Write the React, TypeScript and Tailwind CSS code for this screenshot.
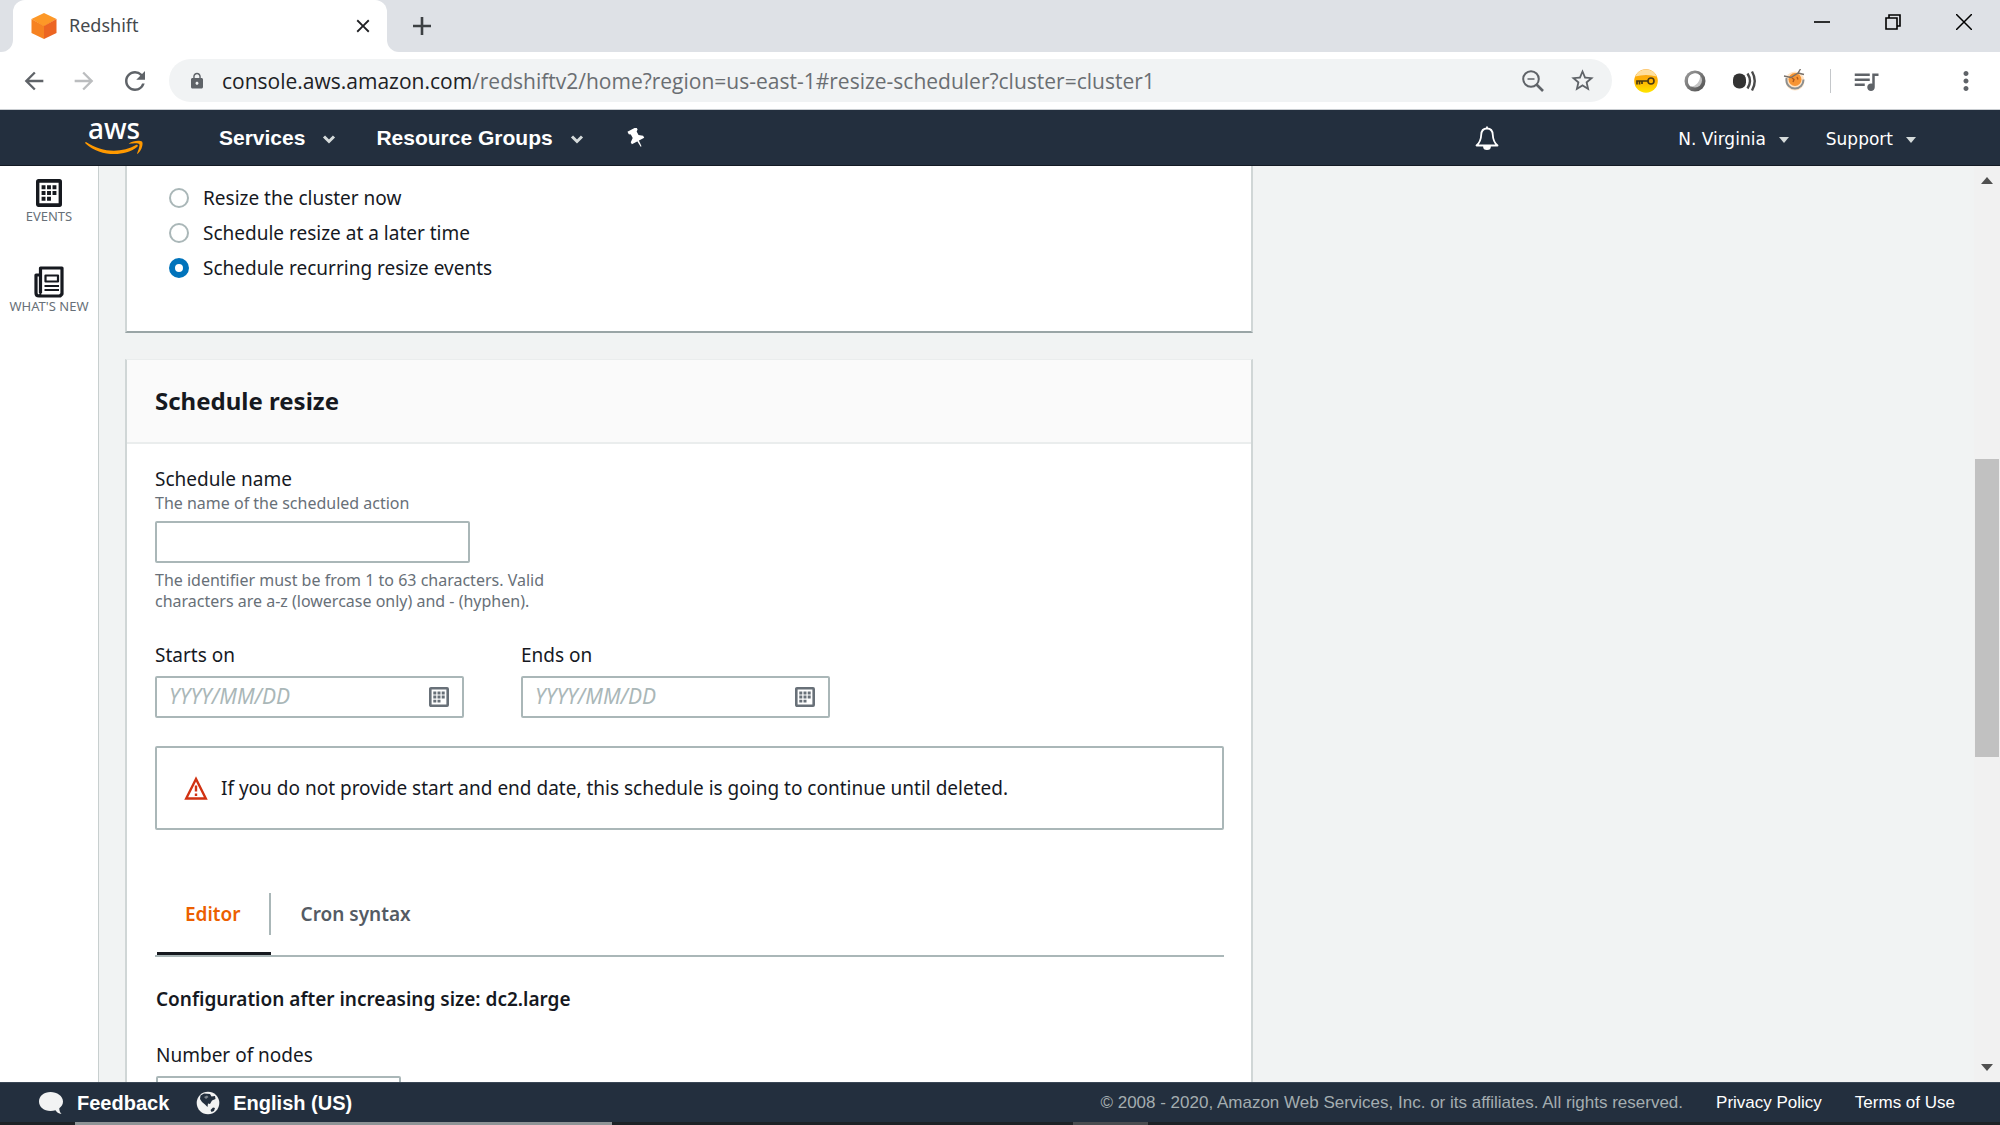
import React, { useState } from "react";
import {
  MdArrowBack, MdArrowForward, MdRefresh, MdLock, MdClose, MdStarBorder, MdMoreVert, MdQueueMusic,
} from "react-icons/md";

const ember = "font-['Noto_Sans',sans-serif]";
const openSans = "font-['Open_Sans',sans-serif]";
const arial = "font-['Liberation_Sans',sans-serif]";
const verdana = "font-['DejaVu_Sans',sans-serif]";

function TabStrip() {
  return (
    <div className="flex h-[52px] items-stretch bg-[#dee1e6]">
      <div className="flex w-[13px] bg-white">
        <div className="w-full rounded-br-xl bg-[#dee1e6]" />
      </div>
      <div className="flex w-[374px] items-center rounded-t-xl bg-white pr-[13px] pl-[18px]">
        <svg viewBox="0 0 26 26" className="size-[26px]" aria-hidden="true">
          <path d="M13 0 25.500 6 13 13.500.5 6z" fill="#fd9827" />
          <path d="M.5 6 13 13v13L.5 20z" fill="#f68221" />
          <path d="M25.500 6 13 13v13l12.500-6z" fill="#ec6522" />
        </svg>
        <span className="ml-3 flex-1 pb-px text-[18px] text-[#45494d]">Redshift</span>
        <button type="button" aria-label="Close tab" className="text-[#202124]">
          <MdClose className="size-[22px]" />
        </button>
      </div>
      <div className="flex w-[14px] bg-white">
        <div className="w-full rounded-bl-xl bg-[#dee1e6]" />
      </div>
      <button type="button" aria-label="New tab" className="ml-3 text-[#3c4043]">
        <svg viewBox="0 0 18 18" className="size-[18px]" fill="none" stroke="currentColor" strokeWidth="2.600"><path d="M0 9h18M9 0v18" /></svg>
      </button>
      <div className="ml-auto flex items-center gap-[55px] pr-7 pb-2 text-black">
        <button type="button" aria-label="Minimize">
          <svg viewBox="0 0 16 16" className="size-4" fill="none" stroke="currentColor" strokeWidth="1.600"><path d="M0 8h16" /></svg>
        </button>
        <button type="button" aria-label="Restore">
          <svg viewBox="0 0 16 16" className="size-4" fill="none" stroke="currentColor" strokeWidth="1.600">
            <path d="M1 4h11v11H1zM4 4V1h11v11h-3" />
          </svg>
        </button>
        <button type="button" aria-label="Close">
          <svg viewBox="0 0 16 16" className="size-4" fill="none" stroke="currentColor" strokeWidth="1.500"><path d="m0 0 16 16M16 0 0 16" /></svg>
        </button>
      </div>
    </div>
  );
}

function Toolbar() {
  return (
    <div className="flex h-[58px] items-center border-b border-[#c9cdd1] bg-white pr-[19px] pl-5 text-[#5f6368]">
      <button type="button" aria-label="Back"><MdArrowBack className="size-7" /></button>
      <button type="button" aria-label="Forward" className="ml-[22px] text-[#bbbdbf]"><MdArrowForward className="size-7" /></button>
      <button type="button" aria-label="Reload" className="ml-[22px]"><MdRefresh className="size-[30px]" /></button>
      <div className="ml-[19px] flex h-[43px] min-w-0 flex-1 items-center rounded-full bg-[#f1f3f4] pr-4 pl-[19px]">
        <MdLock className="size-[18px] shrink-0" />
        <p className={"ml-4 flex-1 truncate text-[21px] leading-7 text-[#6a6e72] " + openSans}>
          <span className="text-[#202124]">console.aws.amazon.com</span>/redshiftv2/home?region=us-east-1#resize-scheduler?cluster=cluster1
        </p>
        <button type="button" aria-label="Zoom" className="mr-6">
          <svg viewBox="0 0 24 24" className="size-6" fill="none" stroke="currentColor" strokeWidth="2">
            <circle cx="10" cy="10" r="7.800" /><path d="M6.500 10h7" strokeWidth="1.500" /><path d="m15.500 15.500 6.500 6.500" strokeWidth="2.600" />
          </svg>
        </button>
        <button type="button" aria-label="Bookmark this page"><MdStarBorder className="size-[27px]" /></button>
      </div>
      <div className="ml-[22px] flex items-center gap-[25px]">
        <button type="button" aria-label="Password manager">
          <svg viewBox="0 0 24 24" className="size-6">
            <defs>
              <linearGradient id="gold" x1="0" y1="0" x2="0" y2="1">
                <stop offset="0" stopColor="#f9a01b" /><stop offset=".5" stopColor="#ffb300" /><stop offset="1" stopColor="#ffe600" />
              </linearGradient>
            </defs>
            <circle cx="12" cy="12" r="11.800" fill="url(#gold)" />
            <path d="M1.200 7.500a11.800 11.800 0 0 1 21.600 0Q12 4.500 1.200 7.500z" fill="#ffdf9c" />
            <path d="M14 12H3v3.500M5.500 12v3.500M8 12v3" stroke="#4a3a12" strokeWidth="1.700" fill="none" />
            <circle cx="17" cy="12" r="3" stroke="#4a3a12" strokeWidth="1.600" fill="none" />
          </svg>
        </button>
        <button type="button" aria-label="Ring extension">
          <svg viewBox="0 0 24 24" className="size-6">
            <defs>
              <linearGradient id="ring" x1="0" y1="0" x2="1" y2="1">
                <stop offset="0" stopColor="#a0a0a0" /><stop offset="1" stopColor="#4c4c4c" />
              </linearGradient>
            </defs>
            <circle cx="12" cy="12" r="10.500" fill="url(#ring)" />
            <circle cx="12" cy="11.500" r="7" fill="#c4c4c4" /><path d="M5 11.500a7 7 0 0 1 12-5c.5 6-4 11-9.500 11A7 7 0 0 1 5 11.500z" fill="#fff" />
          </svg>
        </button>
        <button type="button" aria-label="Sound extension">
          <svg viewBox="0 0 26 24" className="h-6 w-[26px]" fill="none" stroke="#4a4a4a" strokeWidth="2.400">
            <rect x="1" y="4.500" width="13" height="15" rx="6" fill="#333" stroke="none" />
            <path d="M15.500 4.500q5 7.500 0 15M20 2.500q5.500 9.500 0 19" />
          </svg>
        </button>
        <button type="button" aria-label="Fox extension">
          <svg viewBox="0 0 24 24" className="size-6" fill="none">
            <circle cx="12" cy="12" r="9.500" fill="#ffe3c4" /><circle cx="12" cy="10.500" r="6.500" fill="#f79433" />
            <path d="M3.500 9c-1 7 4 10.500 8.500 10.500 5 0 8.500-4 8.500-9" stroke="#8b8f91" strokeWidth="2" />
            <path d="M1 7l7 1.500 7-4.500 2.500-4M15 4l6 1.500" stroke="#77706a" strokeWidth="1.400" />
            <path d="m9 9 2 1.500L10 13M14 8l1 2.500" stroke="#b05a1c" strokeWidth="1.400" />
          </svg>
        </button>
      </div>
      <div className="mr-5 ml-[23px] h-6 w-px bg-[#c4c7ca]" />
      <button type="button" aria-label="Media controls"><MdQueueMusic className="size-[30px]" /></button>
      <button type="button" aria-label="Menu" className="ml-[70px]"><MdMoreVert className="size-[30px]" /></button>
    </div>
  );
}

function Chevron() {
  return (
    <svg viewBox="0 0 14 9" className="mt-[3px] h-[9px] w-[14px]" fill="none" stroke="#d5dbdb" strokeWidth="3"><path d="m2 1.500 5 5 5-5" /></svg>
  );
}
function Caret() {
  return <svg viewBox="0 0 10 6" className="h-[6px] w-[10px]" fill="#d5dbdb"><path d="M0 0h10L5 6z" /></svg>;
}

function AwsHeader() {
  return (
    <header className={"flex h-14 items-center border-b border-[#131a24] bg-[#232f3e] pr-[84px] pl-[85px] text-white " + arial}>
      <a href="#home" aria-label="AWS home" className="flex flex-col items-center">
        <span className={"h-[20px] text-[28px] leading-[18px] font-medium " + ember}>aws</span>
        <svg viewBox="0 0 58 17" className="h-[17px] w-[58px]" aria-hidden="true">
          <path d="M1 3c16 11 36 11 50 3 1.500-.8 2.500.5 1.300 1.800C40 18 15 18 .5 4.500 0 3.500.3 2.600 1 3z" fill="#f90" />
          <path d="M44 4.500C47.500 1.500 55 1 57 2.500c1.500 2 0 8.500-4 12-.8.500-1.200.2-.8-.6 1-2.500 3-7.400 2-8.900-1-1.200-6.500-.6-9.400-.2-1 .1-1.100-.1-.8-.3z" fill="#f90" />
        </svg>
      </a>
      <nav className="ml-[76px] flex items-center text-[21px] leading-7 font-bold">
        <button type="button" className="flex items-center gap-[17px]">Services <Chevron /></button>
        <button type="button" className="ml-10 flex items-center gap-[17px]">Resource Groups <Chevron /></button>
        <button type="button" aria-label="Pin" className="ml-[43px]">
          <svg viewBox="0 0 20 20" className="size-5" fill="#fff">
            <g transform="rotate(-28 10 10)">
              <path d="M4.500 0h10v2.800l-1.700 1.200v4l3.700 2.800v2.400h-14v-2.400L6.200 8V4L4.500 2.800zM8.700 13h1.800l-.4 6.500h-1z" />
            </g>
          </svg>
        </button>
      </nav>
      <button type="button" aria-label="Notifications" className="ml-auto">
        <svg viewBox="0 0 24 24" className="size-6" fill="none" stroke="#fff" strokeWidth="1.800" strokeLinejoin="round">
          <path d="M12 2.500C8 2.500 6.300 5.500 6.200 9 6 14 5 16.500 1.500 19.500h21C19 16.500 18 14 17.800 9 17.700 5.500 16 2.500 12 2.500z" />
          <path d="M9 20.500a3 2.600 0 0 0 6 0z" fill="#fff" /><path d="M12 .5v2" />
        </svg>
      </button>
      <div className={"ml-[179px] flex gap-[37px] pt-1 text-[17px] " + verdana}>
        <button type="button" className="flex items-center gap-[13px]">N. Virginia <Caret /></button>
        <button type="button" className="flex items-center gap-[13px]">Support <Caret /></button>
      </div>
    </header>
  );
}

function CalendarIcon({ className }: { className: string }) {
  return (
    <svg viewBox="0 0 20 20" preserveAspectRatio="none" className={className} aria-hidden="true">
      <rect x="1.300" y="1.300" width="17.400" height="17.400" rx=".6" fill="none" stroke="currentColor" strokeWidth="2.600" />
      <path d="M4.300 4.500h3v2.900h-3zM8.500 4.500h3v2.900h-3zM12.700 4.500h3v2.900h-3zM4.300 8.600h3v2.900h-3zM8.500 8.600h3v2.900h-3zM12.700 8.600h3v2.900h-3zM4.300 12.700h3v2.900h-3zM8.500 12.700h3v2.900h-3z" fill="currentColor" />
    </svg>
  );
}

function SideNav() {
  return (
    <nav className="flex w-[99px] shrink-0 flex-col border-r border-[#c8cfcf] bg-white pt-[13px] text-[13px] leading-4 text-[#687078]">
      <a href="#events" className="flex flex-col items-center gap-px">
        <CalendarIcon className="h-7 w-[26px] text-[#16191f]" />
        EVENTS
      </a>
      <a href="#new" className="mt-[42px] flex flex-col items-center whitespace-nowrap">
        <svg viewBox="0 0 30 32" className="h-8 w-[30px]" fill="none" stroke="#16191f" strokeWidth="3.200" strokeLinejoin="round">
          <path d="M6.500 27V2H28v26l-2 2H5q-3 0-3-3V9h4" /><path d="M6.500 27q0 3-2.500 3" strokeWidth="2" />
          <path d="M11.500 9.500h12.500v6H11.500z" strokeWidth="2.200" /><path d="M10.500 20h14.500M10.500 24h14.500" strokeWidth="2" />
        </svg>
        WHAT'S NEW
      </a>
    </nav>
  );
}

const options = ["Resize the cluster now", "Schedule resize at a later time", "Schedule recurring resize events"];

function DateField({ id, label }: { id: string; label: string }) {
  return (
    <div className="w-[309px]">
      <label htmlFor={id} className="block leading-6">{label}</label>
      <div className="mt-[9px] flex h-[42px] items-center rounded-[2px] border-2 border-[#aab7b8] pr-[13px] pl-3">
        <input id={id} placeholder="YYYY/MM/DD" className="min-w-0 flex-1 outline-none placeholder:text-[21px] placeholder:text-[#aab7b8] placeholder:italic" />
        <button type="button" aria-label={"Choose date: " + label} className="text-[#687078]"><CalendarIcon className="size-5" /></button>
      </div>
    </div>
  );
}

function Content() {
  const [choice, setChoice] = useState(2);
  return (
    <main className="min-w-0 flex-1 overflow-hidden bg-[#f1f3f3] pl-[26px] text-[19px] text-[#16191f]">
      <div className="w-[61%]">
        <section className="border-x-2 border-b-2 border-[#d0d6d6] border-b-[#9aa5a6] bg-white px-[42px] pt-[18px] pb-[49px]">
          <div role="radiogroup" aria-label="Resize time" className="flex flex-col gap-[7px]">
            {options.map((o, i) => (
              <label key={o} className="flex items-center gap-[14px] leading-7">
                <input type="radio" name="when" checked={choice === i} onChange={() => setChoice(i)}
                  className="size-5 appearance-none rounded-full border-2 border-[#aab7b8] bg-white checked:border-[6px] checked:border-[#0073bb]" />
                {o}
              </label>
            ))}
          </div>
        </section>
        <section className="mt-[26px] border-x-2 border-t border-[#d0d6d6] border-t-[#eaeded] bg-white">
          <h2 className="border-b-2 border-[#eaeded] bg-[#fafafa] px-7 py-6 text-[24px] leading-[34px] font-bold">Schedule resize</h2>
          <div className="pt-[23px] pr-[27px] pl-7">
            <label htmlFor="name" className="block leading-6">Schedule name</label>
            <p className="text-[16px] leading-6 text-[#687078]">The name of the scheduled action</p>
            <input id="name" className="mt-[6px] block h-[42px] w-[315px] rounded-[2px] border-2 border-[#aab7b8] px-3 outline-none" />
            <p className="mt-[7px] w-[405px] text-[16px] leading-[21px] text-[#687078]">
              The identifier must be from 1 to 63 characters. Valid characters are a-z (lowercase only) and - (hyphen).
            </p>
            <div className="mt-[31px] flex gap-[57px]">
              <DateField id="starts" label="Starts on" />
              <DateField id="ends" label="Ends on" />
            </div>
            <div role="alert" className="mt-7 flex h-[84px] items-center gap-[13px] rounded-[2px] border-2 border-[#aab7b8] px-[27px]">
              <svg viewBox="0 0 24 24" className="size-6" fill="none" stroke="#d13212" strokeWidth="2.400">
                <path d="M12 3 2.200 22.500h19.600z" /><path d="M12 9.500v6M12 17.500v2.500" />
              </svg>
              If you do not provide start and end date, this schedule is going to continue until deleted.
            </div>
            <div role="tablist" className="mt-[63px] flex border-b-2 border-[#aab7b8] pl-[2px] font-semibold">
              <button type="button" role="tab" aria-selected="true" className="border-b-[3px] border-[#16191f] pb-[17px] text-[#ec5f00]">
                <span className="flex h-[42px] items-center border-r-2 border-[#aab7b8] px-7">Editor</span>
              </button>
              <button type="button" role="tab" aria-selected="false" className="mb-5 h-[42px] px-[30px] text-[#545b64]">Cron syntax</button>
            </div>
            <div className="px-px">
              <h3 className="mt-[28px] leading-7 font-semibold">Configuration after increasing size: dc2.large</h3>
              <label htmlFor="nodes" className="mt-7 block leading-7">Number of nodes</label>
              <input id="nodes" className="mt-[7px] block h-[42px] w-[245px] rounded-[2px] border-2 border-[#aab7b8] px-3 outline-none" />
            </div>
          </div>
        </section>
      </div>
    </main>
  );
}

function Scrollbar() {
  return (
    <div className="flex w-[26px] shrink-0 flex-col items-center bg-[#f1f1f1] pt-[11px] pb-[11px]" aria-hidden="true">
      <svg viewBox="0 0 12 7" className="h-[7px] w-3" fill="#505050"><path d="M0 7 6 0l6 7z" /></svg>
      <div className="w-full grow-[274]" />
      <div className="w-6 grow-[298] bg-[#c1c1c1]" />
      <div className="w-full grow-[306]" />
      <svg viewBox="0 0 12 7" className="h-[7px] w-3" fill="#505050"><path d="m0 0 6 7 6-7z" /></svg>
    </div>
  );
}

function Footer() {
  return (
    <footer className={"border-t border-[#3a4756] bg-[#232f3e] text-white " + arial}>
      <div className="flex h-[39px] items-center pr-[45px] pl-[38px]">
        <button type="button" className="flex items-center gap-[13px] text-[20px] font-bold">
          <svg viewBox="0 0 26 24" className="h-6 w-[26px]" fill="#f2f3f3"><path d="M12.500 1C6 1 1 5 1 10.500S6 20 12.500 20c1.800 0 3.500-.3 5-.8 1 1.800 3 3.300 6 3.800-1.500-1.500-2.200-3.500-2.200-5.800C23.700 15.500 25 13.200 25 10.500 25 5 19 1 12.500 1z" /></svg>
          Feedback
        </button>
        <button type="button" className="ml-[27px] flex items-center gap-[13px] text-[20px] font-bold">
          <svg viewBox="0 0 24 24" className="size-6">
            <circle cx="12" cy="12" r="11.300" fill="#f2f3f3" />
            <path d="M4.500 4.500 8 2.500l6 .5 1.500 2.500L19 5l.5 3-3.500 1.500-2 3.500-2-.5-.5 3.500-2.500-2.500L6 11 4 8zM14.500 19l2.500-2.500 2 .5-1 3-2.500 1z" fill="#232f3e" />
            <path d="m8 6 3-1.500 1.500 1.500L10 8z" fill="#7d858d" />
          </svg>
          English (US)
        </button>
        <p className="ml-auto text-[17px] text-[#a4adb0]">© 2008 - 2020, Amazon Web Services, Inc. or its affiliates. All rights reserved.</p>
        <a href="#privacy" className="ml-[33px] text-[17px]">Privacy Policy</a>
        <a href="#terms" className="ml-[33px] text-[17px]">Terms of Use</a>
      </div>
      <div className="flex h-[3px] bg-[#1d2226]">
        <div className="ml-[75px] h-full w-[537px] bg-[#8e9496]" />
        <div className="ml-[461px] h-full w-[75px] bg-[#4a4d50]" />
      </div>
    </footer>
  );
}

export default function App() {
  return (
    <div className={"flex h-screen flex-col overflow-hidden bg-white " + ember}>
      <TabStrip />
      <Toolbar />
      <AwsHeader />
      <div className="flex min-h-0 flex-1">
        <SideNav />
        <Content />
        <Scrollbar />
      </div>
      <Footer />
    </div>
  );
}
